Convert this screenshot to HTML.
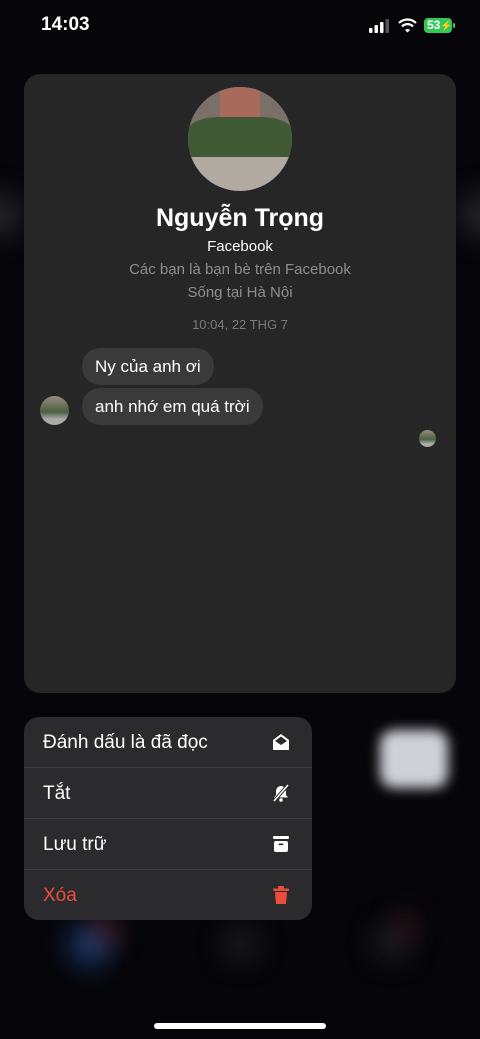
<!DOCTYPE html>
<html><head><meta charset="utf-8"><style>
*{margin:0;padding:0;box-sizing:border-box}
body{width:480px;height:1039px;background:#06060a;position:relative;overflow:hidden;font-family:"Liberation Sans","Noto Sans CJK SC",sans-serif;color:#fff}
.blob{position:absolute;filter:blur(14px);border-radius:50%}
.card{position:absolute;left:24px;top:74px;width:432px;height:619px;background:#262626;border-radius:16px}
.av{position:absolute;left:188px;top:87px;width:104px;height:104px;border-radius:50%;overflow:hidden;background:#8a8a80}
.c{position:absolute;left:0;width:480px;text-align:center}
.bub{position:absolute;left:82px;background:#3a3a3a;border-radius:18px;height:37px;line-height:37px;padding:0 13px;font-size:17px}
.menu{position:absolute;left:24px;top:717px;width:288px;height:203px;background:#2b2b2d;border-radius:15px;overflow:hidden}
.row{height:51px;border-bottom:1px solid #3d3d40;position:relative;font-size:19px;line-height:51px;padding-left:19px}
.row:last-child{border:none}
.ic{position:absolute;right:22px;top:16px}
</style></head><body>
<div class="blob" style="left:-20px;top:195px;width:40px;height:40px;background:#2a2a30"></div>
<div class="blob" style="left:462px;top:195px;width:40px;height:40px;background:#2a2a30"></div>
<div class="blob" style="left:380px;top:730px;width:68px;height:58px;border-radius:14px;background:#d0d0d8;filter:blur(6px)"></div>
<div class="blob" style="left:72px;top:927px;width:36px;height:36px;background:#1f4a8a"></div>
<div class="blob" style="left:95px;top:920px;width:20px;height:20px;background:#8a2a2a"></div>
<div class="blob" style="left:227px;top:930px;width:28px;height:28px;background:#26262c"></div>
<div class="blob" style="left:377px;top:927px;width:30px;height:30px;background:#26262c"></div>
<div class="blob" style="left:398px;top:918px;width:16px;height:16px;background:#6a2222"></div>

<div style="position:absolute;left:41px;top:14px;font-size:19px;font-weight:bold">14:03</div>
<svg style="position:absolute;left:369px;top:19px" width="22" height="14"><rect x="0" y="9" width="3.5" height="5" rx="1" fill="#fff"/><rect x="5.5" y="6" width="3.5" height="8" rx="1" fill="#fff"/><rect x="11" y="3" width="3.5" height="11" rx="1" fill="#fff"/><rect x="16.5" y="0" width="3.5" height="14" rx="1" fill="#555"/></svg>
<svg style="position:absolute;left:398px;top:18px" width="19" height="15" viewBox="0 0 19 15"><path d="M1 5a12 12 0 0 1 17 0" stroke="#fff" stroke-width="2.2" fill="none"/><path d="M4 8.5a7.5 7.5 0 0 1 11 0" stroke="#fff" stroke-width="2.2" fill="none"/><path d="M7 12l2.5 2.5L12 12a3.5 3.5 0 0 0-5 0z" fill="#fff"/></svg>
<div style="position:absolute;left:424px;top:18px;width:28px;height:15px;background:#34c759;border-radius:4px;font-size:12px;font-weight:bold;color:#fff;line-height:15px;padding-left:3px">53<span style="font-size:10px">⚡</span></div>
<div style="position:absolute;left:453px;top:23px;width:2px;height:5px;background:#34c759;border-radius:1px"></div>

<div class="card"></div>
<div class="av"><div style="position:absolute;left:0;top:0;width:104px;height:40px;background:#7a7068"></div><div style="position:absolute;left:32px;top:0;width:40px;height:50px;background:#a86a5a"></div><div style="position:absolute;left:0;top:30px;width:104px;height:45px;background:#3f5a35;border-radius:30% 30% 0 0"></div><div style="position:absolute;left:0;top:70px;width:104px;height:34px;background:#b0aaa0"></div></div>
<div class="c" style="top:204px;font-size:25px;font-weight:bold">Nguyễn Trọng</div>
<div class="c" style="top:238px;font-size:15px">Facebook</div>
<div class="c" style="top:261px;font-size:15px;color:#8e8e8e">Các bạn là bạn bè trên Facebook</div>
<div class="c" style="top:284px;font-size:15px;color:#8e8e8e">Sống tại Hà Nội</div>
<div class="c" style="top:317px;font-size:13px;color:#7a7a7a">10:04, 22 THG 7</div>
<div class="bub" style="top:348px">Ny của anh ơi</div>
<div class="bub" style="top:388px">anh nhớ em quá trời</div>
<div style="position:absolute;left:40px;top:396px;width:29px;height:29px;border-radius:50%;background:linear-gradient(#9a8a80,#4a6040 55%,#aaa 80%)"></div>
<div style="position:absolute;left:419px;top:430px;width:17px;height:17px;border-radius:50%;background:linear-gradient(#9a8a80,#4a6040 55%,#aaa 80%)"></div>

<div class="menu">
<div class="row">Đánh dấu là đã đọc<svg class="ic" width="18" height="18" viewBox="0 0 18 18"><path d="M9 1L1 7v10h16V7z" fill="#fff"/><path d="M3 8l6-4.5L15 8 9 12z" fill="#2b2b2d"/></svg></div>
<div class="row">Tắt<svg class="ic" width="18" height="18" viewBox="0 0 18 18"><path d="M9 2a5 5 0 0 0-5 5v4l-2 2.5h14L14 11V7a5 5 0 0 0-5-5z" fill="#fff"/><circle cx="9" cy="16" r="1.8" fill="#fff"/><path d="M2 17L16 1" stroke="#2b2b2d" stroke-width="3.5"/><path d="M2 17L16 1" stroke="#fff" stroke-width="1.6"/></svg></div>
<div class="row">Lưu trữ<svg class="ic" width="18" height="18" viewBox="0 0 18 18"><rect x="1" y="1" width="16" height="3" rx="1" fill="#fff"/><rect x="2" y="6" width="14" height="11" rx="2" fill="#fff"/><rect x="6.5" y="8.5" width="5" height="1.6" rx=".8" fill="#2b2b2d"/></svg></div>
<div class="row" style="color:#eb4d3d">Xóa<svg class="ic" width="18" height="19" viewBox="0 0 18 19"><rect x="6" y="0" width="6" height="3" rx="1" fill="#eb4d3d"/><rect x="1" y="2.5" width="16" height="2.5" rx="1" fill="#eb4d3d"/><path d="M3 6h12l-1 12H4z" fill="#eb4d3d"/></svg></div>
</div>
<div style="position:absolute;left:154px;top:1023px;width:172px;height:6px;border-radius:3px;background:#fff"></div>
</body></html>
